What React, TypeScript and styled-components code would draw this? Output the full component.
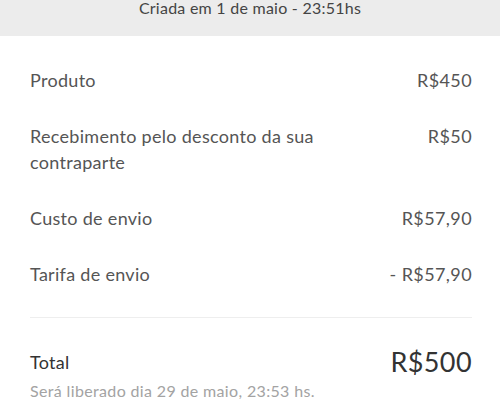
import React from 'react';
import styled, { createGlobalStyle } from 'styled-components';

const GlobalStyle = createGlobalStyle`
  body {
    margin: 0;
    background: #fff;
    font-family: Lato, "Open Sans", sans-serif;
  }
`;

const Header = styled.div`
  height: 36px;
  background: #ececec;
  color: #444;
  font-size: 16px;
  line-height: 16px;
  letter-spacing: 0.25px;
  text-align: center;
`;

const Body = styled.div`
  padding: 31px 28px 0 30px;
`;

const List = styled.div`
  display: flex;
  flex-direction: column;
  gap: 30px;
`;

const Row = styled.div`
  display: flex;
  justify-content: space-between;
  align-items: flex-start;
  gap: 40px;
  font-size: 18px;
  line-height: 26px;
  letter-spacing: 0.3px;
  color: #555;
`;

const Label = styled.span`
  max-width: 310px;
`;

const Amount = styled.span<{ $big?: boolean }>`
  white-space: nowrap;
  letter-spacing: 0.4px;
  font-size: ${(p) => (p.$big ? '27px' : '18px')};
  color: ${(p) => (p.$big ? '#333' : '#555')};
`;

const Divider = styled.hr`
  border: none;
  border-top: 1px solid #eeeeee;
  margin: 30px 0 29px;
`;

const TotalRow = styled(Row)`
  align-items: center;
  line-height: 30px;
  color: #333;
`;

const Note = styled.div`
  font-size: 16px;
  line-height: 20px;
  letter-spacing: 0.35px;
  color: #a3a3a3;
  margin-top: 4px;
`;

const items = [
  { label: 'Produto', value: 'R$450' },
  { label: 'Recebimento pelo desconto da sua contraparte', value: 'R$50' },
  { label: 'Custo de envio', value: 'R$57,90' },
  { label: 'Tarifa de envio', value: '- R$57,90' },
];

export default function App() {
  return (
    <>
      <GlobalStyle />
      <Header>Criada em 1 de maio - 23:51hs</Header>
      <Body>
        <List>
          {items.map((it) => (
            <Row key={it.label}>
              <Label>{it.label}</Label>
              <Amount>{it.value}</Amount>
            </Row>
          ))}
        </List>
        <Divider />
        <TotalRow>
          <span>Total</span>
          <Amount $big>R$500</Amount>
        </TotalRow>
        <Note>Será liberado dia 29 de maio, 23:53 hs.</Note>
      </Body>
    </>
  );
}
